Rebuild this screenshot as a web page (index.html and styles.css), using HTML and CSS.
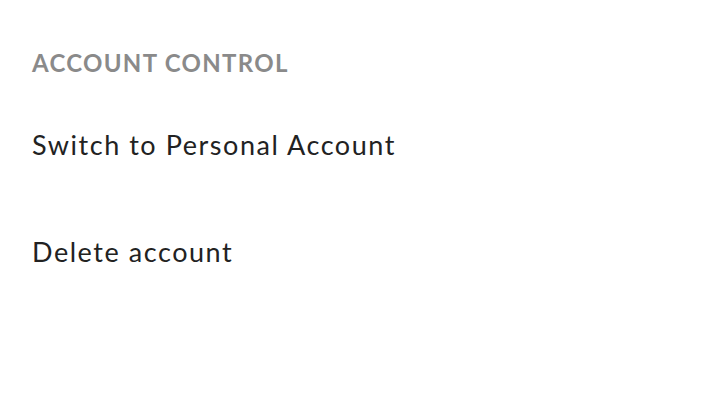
FILE: index.html
```html
<!DOCTYPE html>
<html>
<head>
<meta charset="utf-8">
<link rel="stylesheet" href="styles.css">
</head>
<body>
<div class="page">
  <h2 class="section-title">ACCOUNT CONTROL</h2>
  <div class="item">Switch to Personal Account</div>
  <div class="item">Delete account</div>
</div>
</body>
</html>
```
FILE: styles.css
```css
html, body {
  margin: 0;
  padding: 0;
  background: #ffffff;
}
.page {
  padding: 48px 32px 0 32px;
  font-family: "Lato", "Open Sans", sans-serif;
}
.section-title {
  margin: 0;
  font-size: 24px;
  line-height: 30px;
  font-weight: 700;
  color: #8a8a8a;
  letter-spacing: 1.3px;
}
.item {
  font-size: 27px;
  line-height: 34px;
  color: #222222;
  font-weight: 400;
  letter-spacing: 1.55px;
}
.section-title + .item {
  margin-top: 50px;
}
.item + .item {
  margin-top: 73px;
}
```
